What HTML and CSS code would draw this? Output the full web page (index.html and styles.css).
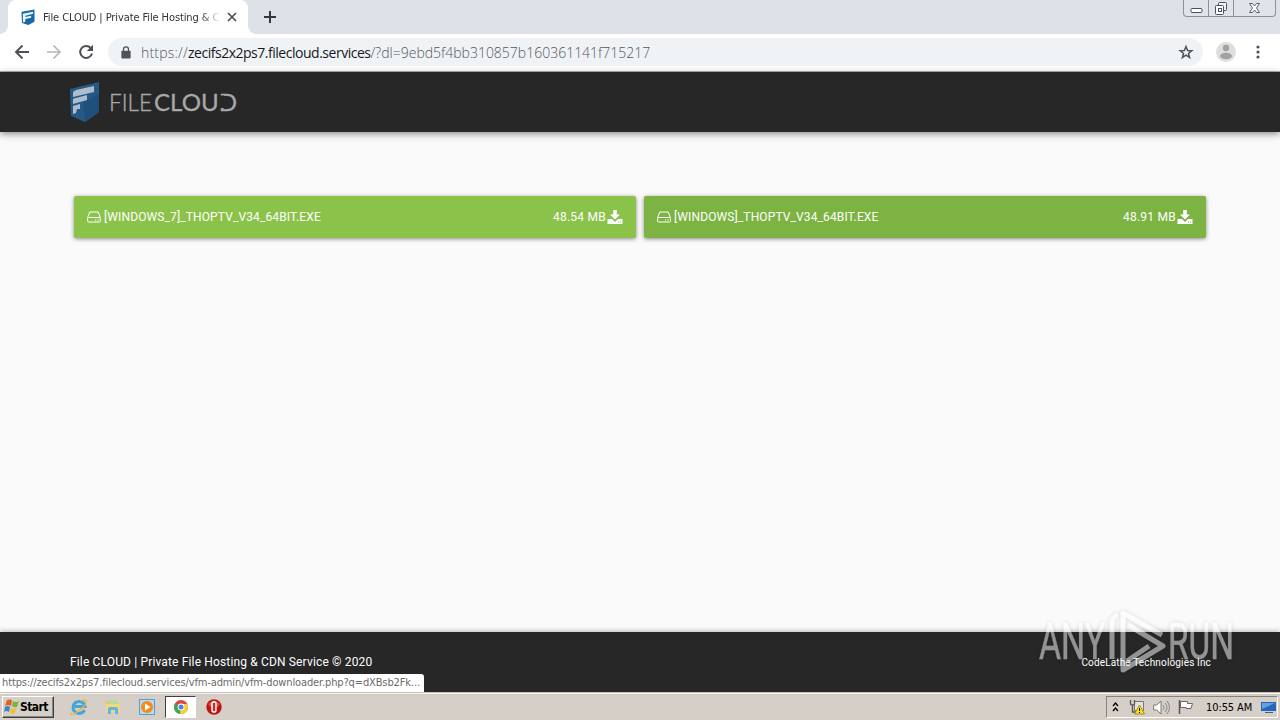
FILE: index.html
```html
<!DOCTYPE html>
<html lang="en">
<head>
    <meta charset="UTF-8">
    <meta name="viewport" content="width=device-width, initial-scale=1.0">
    <title>File CLOUD | Private File Hosting &amp; CDN Service</title>
    <link rel="stylesheet" href="styles.css">
</head>
<body>
    <div class="browser">
        <div class="tab-strip">
            <div class="tab">
                <svg class="favicon" width="14" height="16" viewBox="0 0 29 40" preserveAspectRatio="none">
                    <path fill="#1768a8" d="M1 7L28 1V32L15 40L2 35Z"/>
                    <path fill="#eaf4fb" d="M4 12l21-5v5L9 17v3l12-3v5L9 25v7l-5 2z"/>
                </svg>
                <span class="tab-title">File CLOUD | Private File Hosting &amp; C</span>
                <svg class="tab-close" width="10" height="10" viewBox="0 0 10 10">
                    <path d="M1 1L9 9M9 1L1 9" stroke="#4b4e52" stroke-width="1.7"/>
                </svg>
            </div>
            <svg class="new-tab" width="12" height="12" viewBox="0 0 12 12">
                <path d="M6 0V12M0 6H12" stroke="#34373b" stroke-width="2"/>
            </svg>
            <div class="window-controls">
                <span class="win-btn">
                    <svg width="13" height="16" viewBox="0 0 13 16"><rect x="1" y="8.500" width="11" height="4" rx="1" fill="#fff" stroke="#4a505c"/></svg>
                </span>
                <span class="win-btn">
                    <svg width="14" height="16" viewBox="0 0 14 16"><rect x="4.500" y="2.500" width="8" height="8" rx="1" fill="#eef0f4" stroke="#4a505c"/><rect x="1.500" y="5.500" width="8" height="9" rx="1" fill="#fff" stroke="#4a505c"/><rect x="4.500" y="8.500" width="3" height="3" fill="none" stroke="#4a505c"/></svg>
                </span>
                <span class="win-btn win-close">
                    <svg width="13" height="16" viewBox="0 0 13 16"><path d="M1.500 3.500h3l2 2.500 2-2.500h3L8.500 8l3 4.500h-3l-2-2.500-2 2.500h-3l3-4.500z" fill="#fff" stroke="#5b606b"/></svg>
                </span>
            </div>
        </div>

        <div class="toolbar">
            <svg class="nav-icon" width="16" height="16" viewBox="0 0 16 16"><path d="M15 8H2M8.500 1.500L2 8l6.500 6.500" fill="none" stroke="#4d5156" stroke-width="1.900"/></svg>
            <svg class="nav-icon" width="16" height="16" viewBox="0 0 16 16"><path d="M1 8h13M7.500 1.500L14 8l-6.500 6.500" fill="none" stroke="#b4b6b9" stroke-width="1.700"/></svg>
            <svg class="nav-icon" width="16" height="16" viewBox="0 0 16 16"><path d="M12.700 4A6 6 0 1 0 14 9.500" fill="none" stroke="#4d5156" stroke-width="2"/><path d="M15 0.800V7H8.800z" fill="#4d5156"/></svg>
            <div class="address-bar">
                <svg class="lock" width="10" height="13" viewBox="0 0 10 14"><rect y="5" width="10" height="8.500" rx="1" fill="#505358"/><path d="M2.300 5.500V3.700a2.700 2.700 0 0 1 5.400 0v1.800" fill="none" stroke="#505358" stroke-width="1.400"/></svg>
                <span class="url"><span class="scheme">https://</span><b>zecifs2x2ps7.filecloud.services</b>/?dl=9ebd5f4bb310857b160361141f715217</span>
                <svg class="star" width="16" height="16" viewBox="0 0 16 16"><path d="M8 2.500l1.600 4 4.200.2-3.300 2.700 1.100 4.100L8 11.200l-3.600 2.300 1.100-4.100L2.200 6.700l4.200-.2z" fill="none" stroke="#505358" stroke-width="1.500"/></svg>
            </div>
            <svg class="avatar" width="20" height="20" viewBox="0 0 20 20"><circle cx="10" cy="10" r="10" fill="#dedede"/><circle cx="10" cy="6" r="3.200" fill="#a2a2a2"/><ellipse cx="10" cy="14" rx="6" ry="3.200" fill="#a2a2a2"/></svg>
            <svg class="menu" width="4" height="14" viewBox="0 0 4 14"><g fill="#505358"><circle cx="2" cy="2" r="1.600"/><circle cx="2" cy="7" r="1.600"/><circle cx="2" cy="12" r="1.600"/></g></svg>
        </div>

        <div class="page">
            <header class="site-header">
                <svg class="logo" width="170" height="42" viewBox="0 0 170 42">
                    <path fill="#255a87" d="M0 8L29 1V31L15 41L1 35Z"/>
                    <path fill="#1f507b" d="M13 22L29 12V31L15 41z"/>
                    <path fill="#aebdcb" d="M3 12q0-2 3-3l18-4v6L3 16zM3 19q0-2 3-2l11-3v5L3 23zM3 25l7-2v5l-3 0-1 4-3 1z"/>
                    <text x="39" y="29.500" class="logo-light" textLength="43" lengthAdjust="spacingAndGlyphs">FILE</text>
                    <text x="84" y="29.500" class="logo-bold" textLength="83" lengthAdjust="spacingAndGlyphs">CLOUD</text>
                    <path d="M150 14.500h4v12.500h-4z" fill="#272727"/>
                </svg>
            </header>

            <main class="files">
                <a class="file-btn">
                    <svg width="14" height="12" viewBox="0 0 14 12"><path d="M.6 6.500L2.800 1h8.400l2.200 5.500M1.600 6.500h10.800q1 0 1 1V10q0 1-1 1H1.600q-1 0-1-1V7.500q0-1 1-1zM8 9h1.200M10.500 9h1.200" fill="none" stroke="#fff"/></svg>
                    <span class="file-name">[WINDOWS_7]_THOPTV_V34_64BIT.EXE</span>
                    <span class="file-size">48.54 MB</span>
                    <svg width="16" height="14" viewBox="0 0 16 14"><path fill="#fff" d="M6.200 0h3.600v4.500H13L8 9.500 3 4.500h3.200zM.5 9H5l3 3 3-3h4.500v5H.5z"/><path fill="#8bc34a" d="M11 11.500h1v1h-1zM13 11.500h1v1h-1z"/></svg>
                </a>
                <a class="file-btn active">
                    <svg width="14" height="12" viewBox="0 0 14 12"><path d="M.6 6.500L2.800 1h8.400l2.200 5.500M1.600 6.500h10.800q1 0 1 1V10q0 1-1 1H1.600q-1 0-1-1V7.500q0-1 1-1zM8 9h1.200M10.500 9h1.200" fill="none" stroke="#fff"/></svg>
                    <span class="file-name">[WINDOWS]_THOPTV_V34_64BIT.EXE</span>
                    <span class="file-size">48.91 MB</span>
                    <svg width="16" height="14" viewBox="0 0 16 14"><path fill="#fff" d="M6.200 0h3.600v4.500H13L8 9.500 3 4.500h3.200zM.5 9H5l3 3 3-3h4.500v5H.5z"/><path fill="#7cb342" d="M11 11.500h1v1h-1zM13 11.500h1v1h-1z"/></svg>
                </a>
            </main>

            <footer class="site-footer">
                <span class="footer-left">File CLOUD | Private File Hosting &amp; CDN Service © 2020</span>
                <span class="footer-right">CodeLathe Technologies Inc</span>
            </footer>
        </div>

        <div class="status-bubble">https://zecifs2x2ps7.filecloud.services/vfm-admin/vfm-downloader.php?q=dXBsb2Fk...</div>

        <svg class="watermark" width="200" height="66" viewBox="0 0 200 66">
            <g class="mark-text">
                <text x="2" y="52" textLength="66" lengthAdjust="spacingAndGlyphs">ANY</text>
                <text x="131" y="52" textLength="66" lengthAdjust="spacingAndGlyphs">RUN</text>
            </g>
            <path class="mark-play" d="M75 52V14q0-4 6-6M125 28L86 6V63L126 39L91 18M90 54L112 39"/>
        </svg>
    </div>

    <div class="taskbar">
        <div class="start">
            <svg width="16" height="16" viewBox="0 0 16 16"><path fill="#e65c25" d="M3 1q3-1 5 0L7 7Q4 5 1 7z"/><path fill="#77b83b" d="M9 2q3 2 6 0l-2 6q-3 1-5-1z"/><path fill="#3c83cf" d="M1 8q3-2 5 0l-1 5q-3-2-5 0z"/><path fill="#f5bd28" d="M7 9q3 2 5 0l-1 5q-3 2-5-1z"/></svg>
            <span>Start</span>
        </div>
        <div class="launch">
            <svg width="18" height="18" viewBox="0 0 18 18"><path d="M14.500 12A6 6 0 1 1 15 8.500H5" fill="none" stroke="#45a5db" stroke-width="3"/><path d="M2 15q-3 3 2 1Q14 10 16 5q1-5-5-2" fill="none" stroke="#e3b73e" stroke-width="1.300"/></svg>
            <svg width="18" height="18" viewBox="0 0 18 18"><path d="M2 3h5l1 2h7v4H2z" fill="#e8c665"/><path d="M5 2h8v5H5z" fill="#b9d99d"/><path d="M2 6h14v8H2z" fill="#f1d77d"/><path d="M4 16v-5q0-2 2-2h6q2 0 2 2v5h-3v-4H7v4z" fill="#63b5df"/></svg>
            <svg width="18" height="18" viewBox="0 0 18 18"><rect x="1.500" y="1.500" width="15" height="15" fill="#b8d9f3" stroke="#5d9bd1"/><circle cx="9" cy="9" r="6" fill="#f28b18"/><path d="M7 5.500L12.500 9 7 12.500z" fill="#fff"/></svg>
            <div class="task-active">
                <svg width="14" height="14" viewBox="0 0 14 14"><circle cx="7" cy="7" r="7" fill="#e04436"/><path d="M7 7L1 3.500A7 7 0 0 0 6 14z" fill="#3da851"/><path d="M7 7l-1 7a7 7 0 0 0 7.200-10H7z" fill="#f9ce3c"/><circle cx="7" cy="7" r="3.400" fill="#fff"/><circle cx="7" cy="7" r="2.500" fill="#4685e7"/></svg>
            </div>
            <svg width="18" height="18" viewBox="0 0 18 18"><circle cx="9" cy="9" r="7.700" fill="#b81412"/><path d="M3 6q6-7 12 0l-2 3H5z" fill="#dc4a40"/><rect x="7" y="4" width="4" height="10" rx="1.500" fill="#c82d25" stroke="#fff" stroke-width="1.500"/></svg>
        </div>
        <div class="tray">
            <svg width="7" height="10" viewBox="0 0 7 10"><path d="M1 4l2.500-3L6 4M1 9l2.500-3L6 9" fill="none" stroke="#000" stroke-width="1.300"/></svg>
            <svg class="network" width="16" height="16" viewBox="0 0 16 16"><path d="M5.500 2.500h9v9h-9z" fill="#e4e4e0" stroke="#777"/><path d="M1.500 1v4q0 1 2 1t2-1V1M3.500 6v7H7" fill="none" stroke="#555" stroke-width="1.300"/><path d="M10.500 6l5 9h-10z" fill="#f8df28" stroke="#a58c15"/><path d="M10.500 9v3M10.500 13v1" stroke="#111"/></svg>
            <svg width="17" height="15" viewBox="0 0 17 15"><path d="M.7 5h3L8 1v13l-4.300-4h-3z" fill="#fff" stroke="#777"/><path d="M10 5q2 2.500 0 5M12 3q4 4.500 0 9M14 1q5 6.500 0 13" fill="none" stroke="#858585"/></svg>
            <svg width="16" height="16" viewBox="0 0 16 16"><path d="M1.500 1v14" stroke="#555" stroke-width="1.500"/><path d="M2.500 2.500h7v2h5l-1.500 5H8v-1H2.500z" fill="#fff" stroke="#666"/></svg>
            <span class="clock">10:55 AM</span>
            <svg width="15" height="13" viewBox="0 0 15 13"><path d="M0 1h15v9H0z" fill="#2465bd"/><path d="M1 2h13L1 8z" fill="#66a0e0"/><path d="M4 11h8v1H4z" fill="#4c5967"/></svg>
        </div>
    </div>
</body>
</html>
```

FILE: styles.css
```css
* {
    margin: 0;
    padding: 0;
    box-sizing: border-box;
}

body {
    width: 1280px;
    height: 720px;
    overflow: hidden;
    font-family: "DejaVu Sans Condensed", "DejaVu Sans", sans-serif;
}

svg {
    display: block;
    flex: none;
}

.browser {
    position: relative;
    height: 692px;
    display: flex;
    flex-direction: column;
}

.tab-strip {
    height: 34px;
    background: #dee1e7;
    display: flex;
    padding-left: 8px;
}

.tab {
    position: relative;
    width: 240px;
    height: 34px;
    background: #fff;
    border-radius: 8px 8px 0 0;
    display: flex;
    align-items: center;
    padding-left: 13px;
}

/* curved feet of the tab */
.tab::before,
.tab::after {
    content: '';
    position: absolute;
    bottom: 0;
    width: 8px;
    height: 8px;
}

.tab::before {
    left: -8px;
    background: radial-gradient(circle at 0 0, #dee1e7 7.5px, #fff 8px);
}

.tab::after {
    right: -8px;
    background: radial-gradient(circle at 100% 0, #dee1e7 7.5px, #fff 8px);
}

.tab-title {
    width: 178px;
    margin-left: 8px;
    overflow: hidden;
    white-space: nowrap;
    font-size: 11px;
    letter-spacing: -0.1px;
    color: #303236;
    -webkit-mask-image: linear-gradient(to right, #000 158px, transparent 178px);
}

.tab-close {
    margin-left: 6px;
}

.new-tab {
    margin: 11px 0 0 16px;
}

.window-controls {
    display: flex;
    width: 93px;
    height: 17px;
    margin-left: auto;
    margin-right: 4px;
    border: 1px solid #8c919c;
    border-top: none;
    border-radius: 0 0 4px 4px;
    background: #e0e3e9;
}

.win-btn {
    width: 25px;
    display: flex;
    justify-content: center;
    border-right: 1px solid #8c919c;
}

.win-close {
    width: 41px;
    border-right: none;
}

.toolbar {
    height: 38px;
    background: #fff;
    border-bottom: 1px solid #b3b3b3;
    display: flex;
    align-items: center;
    padding: 0 0 1px 14px;
}

.nav-icon {
    margin-right: 16px;
}

.address-bar {
    width: 1095px;
    height: 28px;
    margin-left: -2px;
    border-radius: 14px;
    background: #f0f3f6;
    display: flex;
    align-items: center;
    padding: 0 9px 0 13px;
}

.url {
    margin-left: 10px;
    font-family: "Open Sans", sans-serif;
    font-size: 14px;
    font-weight: 300;
    color: #53575c;
    white-space: nowrap;
}

.url .scheme {
    letter-spacing: 0.2px;
}

.url b {
    font-weight: 400;
    letter-spacing: -0.48px;
    color: #17191c;
}

.star {
    margin-left: auto;
}

.avatar {
    margin-left: 13px;
}

.menu {
    margin-left: 20px;
}

.page {
    flex: 1;
    display: flex;
    flex-direction: column;
    background: #fafafa;
    font-family: Roboto, sans-serif;
}

.site-header {
    height: 60px;
    padding: 9px 70px;
    background: #272727;
    box-shadow: 0 2px 7px rgba(0, 0, 0, 0.45);
}

.logo text {
    font-family: Lato, sans-serif;
    font-size: 24px;
    fill: #a8a8a8;
    stroke: #a8a8a8;
}

.logo .logo-light {
    font-weight: 300;
    stroke-width: 0.4px;
}

.logo .logo-bold {
    font-weight: 400;
    stroke-width: 0.3px;
}

.files {
    flex: 1;
    display: flex;
    align-items: flex-start;
    gap: 8px;
    padding: 64px 74px 0;
}

.file-btn {
    flex: 1;
    height: 42px;
    display: flex;
    align-items: center;
    padding: 0 13px;
    border-radius: 2px;
    background: #8bc34a;
    color: #fff;
    font-size: 12px;
    white-space: nowrap;
    box-shadow: 0 1px 4px rgba(0, 0, 0, 0.45);
}

.file-btn.active {
    background: #7cb342;
}

.file-name {
    margin-left: 3px;
    letter-spacing: 0.12px;
}

.file-size {
    margin-left: auto;
    margin-right: 1px;
    letter-spacing: 0.25px;
}

.site-footer {
    height: 60px;
    display: flex;
    align-items: center;
    justify-content: space-between;
    padding: 0 69px 0 70px;
    background: #272727;
    color: #fff;
    font-size: 12px;
    box-shadow: 0 -1px 5px rgba(0, 0, 0, 0.25);
}

.footer-left {
    letter-spacing: 0.15px;
}

.footer-right {
    font-size: 10px;
    letter-spacing: 0.15px;
}

.status-bubble {
    position: absolute;
    left: 0;
    bottom: 0;
    width: 424px;
    height: 18px;
    padding-left: 2px;
    background: #fff;
    border-radius: 0 3px 0 0;
    color: #6b6b6b;
    font-size: 11px;
    line-height: 18px;
    letter-spacing: -0.13px;
    white-space: nowrap;
}

.watermark {
    position: absolute;
    left: 1037px;
    top: 607px;
    filter: drop-shadow(0 0 2px rgba(0, 0, 0, 0.25));
    opacity: 0.5;
}

.mark-text {
    font-family: Roboto, sans-serif;
    font-size: 50px;
    font-weight: 400;
    fill: #fff;
    stroke: #fff;
    stroke-width: 0.5px;
}

.mark-play {
    fill: none;
    stroke: #fff;
    stroke-width: 5px;
    stroke-linejoin: round;
}

.taskbar {
    height: 28px;
    display: flex;
    align-items: center;
    background: #d6cfc7;
    border-top: 1px solid #d6cfc7;
    box-shadow: inset 0 1px #fff;
}

.start {
    width: 52px;
    height: 22px;
    margin: 1px 0 0 2px;
    padding-left: 1px;
    display: flex;
    align-items: center;
    border: 1px solid;
    border-color: #fff #404040 #404040 #fff;
    box-shadow: inset -1px -1px #8a8580;
    font-size: 12px;
    font-weight: bold;
}

.start span {
    letter-spacing: -0.6px;
}

.launch {
    display: flex;
    align-items: center;
    margin: 1px 0 0 16px;
    gap: 16px;
}

.task-active {
    width: 31px;
    height: 22px;
    margin: 0 -7px;
    display: flex;
    align-items: center;
    justify-content: center;
    background: #fff;
    border: 1px solid;
    border-color: #404040 #fff #fff #404040;
}

.tray {
    width: 172px;
    height: 22px;
    margin: 1px 2px 0 auto;
    padding-left: 5px;
    display: flex;
    align-items: center;
    gap: 8px;
    border: 1px solid;
    border-color: #88827a #fff #fff #88827a;
}

.network {
    margin-left: 2px;
}

.clock {
    width: 47px;
    margin-left: 4px;
    font-size: 11px;
    letter-spacing: -0.1px;
    white-space: nowrap;
}
```
